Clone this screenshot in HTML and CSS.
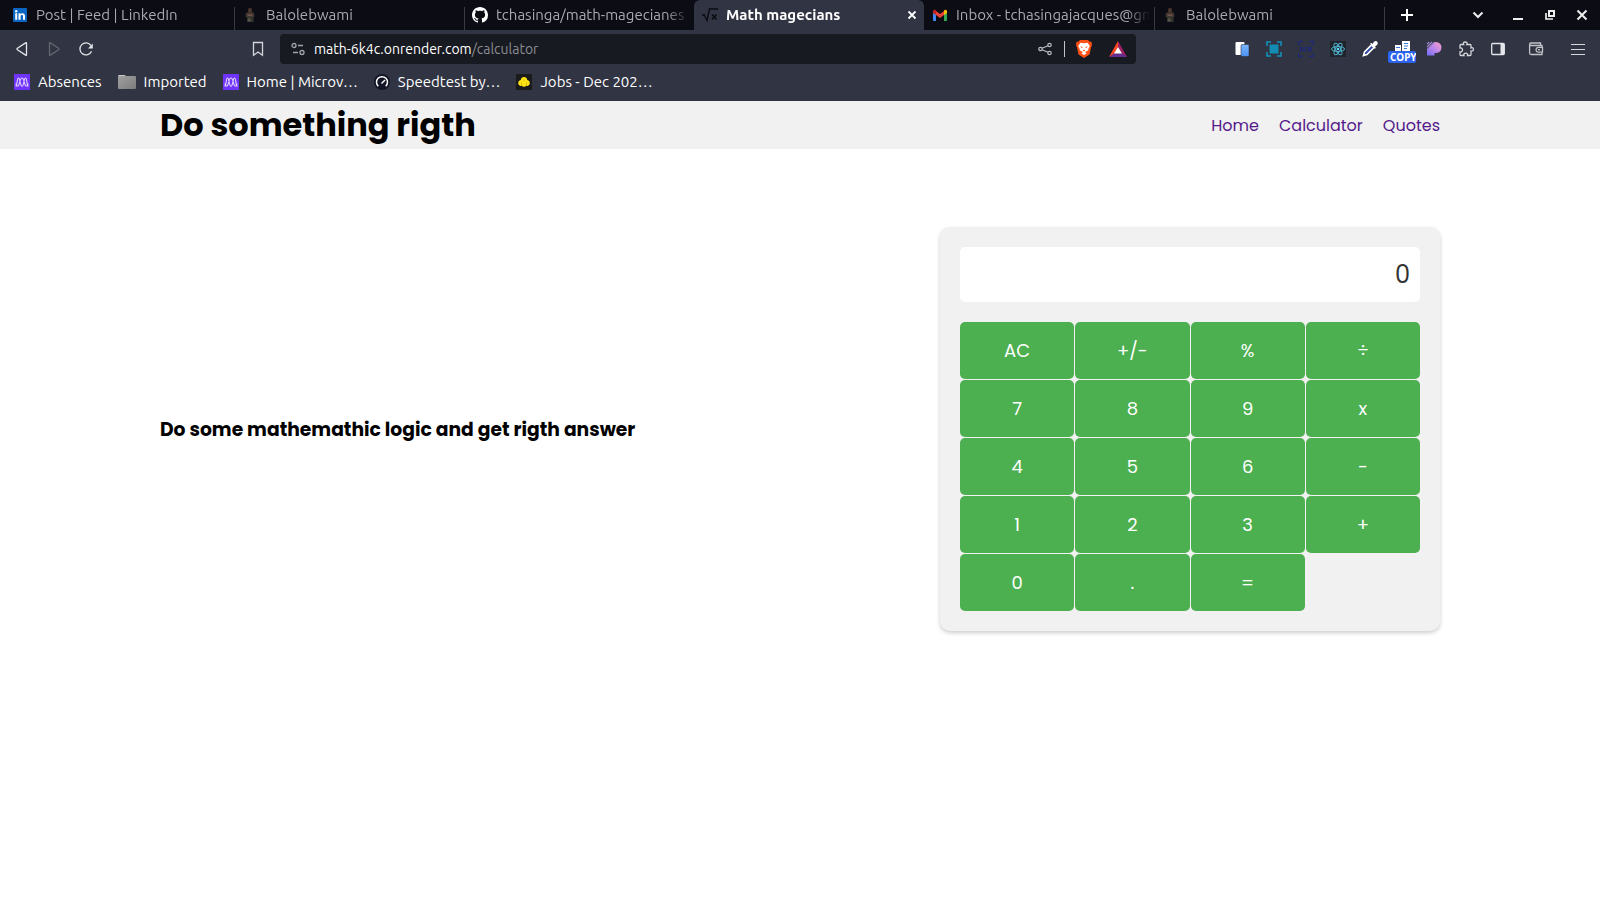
FILE: index.html
```html
<!DOCTYPE html>
<html lang="en">
<head>
<meta charset="utf-8">
<title>Math magecians</title>
<link rel="stylesheet" href="styles.css">
</head>
<body>
<svg class="defs" aria-hidden="true">
  <defs>
    <linearGradient id="gPurple" x1="1" y1="0" x2="0" y2="1"><stop offset="0" stop-color="#f7a0c4"/><stop offset=".5" stop-color="#bd86ec"/><stop offset="1" stop-color="#6f6cf5"/></linearGradient>
    <linearGradient id="gFolder" x1="0" y1="0" x2="1" y2="1"><stop offset="0" stop-color="#a2a2a2"/><stop offset="1" stop-color="#7c7c7c"/></linearGradient>
    <linearGradient id="gBlue" x1="0" y1="0" x2="0" y2="1"><stop offset="0" stop-color="#7db6fb"/><stop offset="1" stop-color="#4a92f5"/></linearGradient>
    <symbol id="person" viewBox="0 0 16 16">
      <rect x="6" y="1" width="4" height="4.500" rx="1.500" fill="#46332c"/>
      <path d="M4 6l2.500-1h3l2.500 1 .5 3.500-1.500 1H5l-1.500-1z" fill="#42342e"/>
      <path d="M5.500 7.500h5v1.200h-5z" fill="#7b6053"/><path d="M5 10h6.500v5H5z" fill="#35352f"/><path d="M6 11.500h2.500v3H6z" fill="#54544a"/>
    </symbol>
    <symbol id="micro" viewBox="0 0 16 16">
      <rect width="16" height="16" fill="#6f33fb"/>
      <path d="M1.500 12.200C3.500 12 2.800 4 4.500 4S6 12.200 8 12.200 9.800 4 11.500 4s1 8.200 3 8.200M2 9.500C2 12 3.800 13 4.800 11S6 4 8 4s2.200 5 3.200 7 2.800 1 2.800-1.500" fill="none" stroke="#e0d2ff" stroke-width="1.100"/>
    </symbol>
  </defs>
</svg>

<header class="browser">
  <div class="tabstrip">
    <div class="tab">
      <svg class="icon" viewBox="0 0 16 16"><rect x="1" y="1" width="14" height="14" rx="1" fill="#0a66c2"/><path d="M3.200 6.300h2v6.500h-2zM6.500 6.300h2v1c1.200-1.800 4.500-1.500 4.500 1.700v3.800h-2V9.400c0-2-2.400-1.900-2.400 0v3.400H6.500z" fill="#fff"/><circle cx="4.200" cy="4.200" r="1.200" fill="#fff"/></svg>
      <span class="tab-title">Post | Feed | LinkedIn</span>
    </div>
    <div class="tab"><svg class="icon"><use href="#person"/></svg><span class="tab-title">Balolebwami</span></div>
    <div class="tab">
      <svg class="icon" viewBox="0 0 16 16"><path fill="#fff" d="M8 0C3.580 0 0 3.580 0 8c0 3.540 2.290 6.530 5.470 7.590.4.070.55-.17.55-.38 0-.19-.01-.82-.01-1.490-2.010.37-2.530-.49-2.690-.94-.09-.23-.48-.94-.82-1.130-.28-.15-.68-.52-.01-.53.63-.01 1.080.58 1.230.82.72 1.210 1.870.87 2.330.66.07-.52.28-.87.51-1.070-1.780-.2-3.640-.89-3.640-3.950 0-.87.31-1.590.82-2.150-.08-.2-.36-1.020.08-2.120 0 0 .67-.21 2.200.82.64-.18 1.320-.27 2-.27s1.360.09 2 .27c1.530-1.040 2.200-.82 2.200-.82.44 1.100.16 1.920.08 2.120.51.56.82 1.270.82 2.150 0 3.070-1.870 3.750-3.650 3.950.29.25.54.73.54 1.480 0 1.070-.01 1.930-.01 2.200 0 .21.15.46.55.38A8.010 8.010 0 0016 8c0-4.420-3.580-8-8-8z"/></svg>
      <span class="tab-title">tchasinga/math-magecianes</span>
    </div>
    <div class="tab tab-active">
      <svg class="icon" viewBox="0 0 16 16"><path d="M0 8.500l2-1 3 6L7.500 2H16" fill="none" stroke="#0b0c14" stroke-width="1.400"/><path d="M10 7.500l4.500 5M14.500 7.500l-4.500 5" stroke="#0b0c14" stroke-width="1.700"/></svg>
      <span class="tab-title">Math magecians</span>
      <button class="tab-close" aria-label="Close tab"><svg class="icon" viewBox="0 0 16 16"><path d="M4.500 4.500l7 7M11.500 4.500l-7 7" stroke="#fff" stroke-width="1.800"/></svg></button>
    </div>
    <div class="tab">
      <svg class="icon" viewBox="0 0 16 16"><path fill="#4285f4" d="M1 4h3v10H2q-1 0-1-1z"/><path fill="#34a853" d="M12 4h3v9q0 1-1 1h-2z"/><path fill="#ea4335" d="M4 4l4 3 4-3v4l-4 3-4-3z"/><path fill="#c5221f" d="M1 4.500C1 2.500 3 2.200 4 3.500V8L1 6z"/><path fill="#fbbc04" d="M15 4.500C15 2.500 13 2.200 12 3.500V8l3-2z"/></svg>
      <span class="tab-title">Inbox - tchasingajacques@gm</span>
    </div>
    <div class="tab"><svg class="icon"><use href="#person"/></svg><span class="tab-title">Balolebwami</span></div>
    <button class="tool new-tab" aria-label="New tab"><svg class="icon" viewBox="0 0 16 16"><path d="M8 2v12M2 8h12" stroke="#fff" stroke-width="2"/></svg></button>
    <div class="window-controls">
      <button class="tool tab-search" aria-label="Search tabs"><svg class="icon" viewBox="0 0 16 16"><path d="M3.500 5.500L8 10l4.500-4.500" fill="none" stroke="#eee" stroke-width="2"/></svg></button>
      <button class="tool" aria-label="Minimize"><svg class="icon" viewBox="0 0 16 16"><path d="M3 12h10" stroke="#eee" stroke-width="2"/></svg></button>
      <button class="tool" aria-label="Restore"><svg class="icon" viewBox="0 0 16 16"><path d="M7 4h5v5H7z" fill="none" stroke="#eee" stroke-width="2"/><path d="M4 6v6h7" fill="none" stroke="#eee" stroke-width="1.700"/></svg></button>
      <button class="tool" aria-label="Close window"><svg class="icon" viewBox="0 0 16 16"><path d="M3.500 3.500l9 9M12.500 3.500l-9 9" stroke="#eee" stroke-width="2"/></svg></button>
    </div>
  </div>

  <div class="toolbar">
    <button class="tool" aria-label="Back"><svg class="icon" viewBox="0 0 16 16"><path d="M12.500 2.300v11.400q0 1-.9.400L3.400 8.700q-.9-.7 0-1.400l8.200-5.400q.9-.6.9.4z" fill="none" stroke="#e4e5ea" stroke-width="1.300"/></svg></button>
    <button class="tool" aria-label="Forward"><svg class="icon" viewBox="0 0 16 16"><path d="M3.500 2.300v11.400q0 1 .9.400l8.200-5.400q.9-.7 0-1.400L4.400 1.900q-.9-.6-.9.400z" fill="none" stroke="#646672" stroke-width="1.300"/></svg></button>
    <button class="tool" aria-label="Reload"><svg class="icon" viewBox="0 0 16 16"><path d="M13.500 10.200a6 6 0 1 1-.5-5.500" fill="none" stroke="#e4e5ea" stroke-width="1.300"/><path d="M14.800 2.500v5H10z" fill="#e4e5ea"/></svg></button>
    <button class="tool bookmark" aria-label="Bookmark this page"><svg class="icon" viewBox="0 0 16 16"><path d="M3.500 1.500h9v12.800L8 11l-4.500 3.300z" fill="none" stroke="#d5d6db" stroke-width="1.300"/></svg></button>
    <div class="address">
      <svg class="icon" viewBox="0 0 16 16" fill="none" stroke="#a2a4a9" stroke-width="1.300"><circle cx="4" cy="4.500" r="2"/><circle cx="12" cy="11.500" r="2"/><path d="M8 4.500h5M3 11.500h5"/></svg>
      <span class="url">math-6k4c.onrender.com<span class="url-path">/calculator</span></span>
      <button class="tool" aria-label="Share"><svg class="icon" viewBox="0 0 16 16" fill="none" stroke="#b9bbbf" stroke-width="1.200"><circle cx="3.500" cy="8" r="1.700"/><circle cx="12.500" cy="4" r="1.700"/><circle cx="12.500" cy="12" r="1.700"/><path d="M5 7.300l6-2.600M5 8.700l6 2.600"/></svg></button>
      <span class="divider"></span>
      <button class="tool shield" aria-label="Brave Shields"><svg class="icon-lg" viewBox="0 0 18 18"><path d="M5 0h8l1.500 1.500L16.500 2l.5 3-1 2.500-1.500 7L9 18l-5.500-3.500L2 7.500 1 5l.5-3 2-.5z" fill="#fb4f13"/><path d="M5.500 2.800L9 3.300l3.500-.5L14.800 6l-1.300 2.500-.4 2-3 1.500 1.500 1.500L9 15l-2.600-1.500L7.900 12l-3-1.500-.4-2L3.200 6z" fill="#fff"/><path d="M5 6.200l2.600.9-.5 1.200zM13 6.200l-2.600.9.5 1.200zM9 9.500l1.200 1L9 11.500l-1.200-1z" fill="#fb4f13"/></svg></button>
      <button class="tool" aria-label="Brave Rewards"><svg class="icon-lg" viewBox="0 0 18 18"><path d="M9 1L0 17l5.500-3L9 7z" fill="#ff4724"/><path d="M9 1l9 16-5.500-3L9 7z" fill="#9e1f63"/><path d="M0 17h18l-5.500-4h-7z" fill="#662d91"/><path d="M9 7l4 6.500H5z" fill="#fff"/></svg></button>
    </div>
    <button class="tool" aria-label="Clipboard"><svg class="icon" viewBox="0 0 16 16"><rect x="1.500" y="1" width="9" height="13" rx="1" fill="#fff"/><rect x="7" y="3.500" width="8" height="12" rx="1" fill="url(#gBlue)" stroke="#313442" stroke-width=".6"/></svg></button>
    <button class="tool" aria-label="Screenshot"><svg class="icon" viewBox="0 0 16 16"><path d="M1 5V1h4M11 1h4v4M15 11v4h-4M5 15H1v-4" fill="none" stroke="#1194bd" stroke-width="1.500"/><rect x="3.500" y="3.500" width="9" height="9" fill="#138cb4"/></svg></button>
    <button class="tool" aria-label="OCR"><svg class="icon" viewBox="0 0 16 16" fill="none" stroke="#1d287c" stroke-width="1.200"><path d="M.6 4V.6H5M11 .6h4.400V4M15.400 12v3.400H11M5 15.400H.6V12"/><ellipse cx="3.800" cy="8" rx="1.500" ry="2"/><path d="M9.400 6.300q-2.600-.6-2.600 1.700t2.600 1.700M11.200 10.300V6.100h1.300q1.600 1.100 0 2.200h-1.300l2.400 2"/></svg></button>
    <button class="tool" aria-label="React Developer Tools"><svg class="icon" viewBox="0 0 16 16"><rect width="16" height="16" fill="#20232a"/><g fill="none" stroke="#4fb4d0"><ellipse cx="8" cy="8" rx="6.500" ry="2.500"/><ellipse cx="8" cy="8" rx="6.500" ry="2.500" transform="rotate(60 8 8)"/><ellipse cx="8" cy="8" rx="6.500" ry="2.500" transform="rotate(120 8 8)"/></g><circle cx="8" cy="8" r="1.300" fill="#61dafb"/></svg></button>
    <button class="tool" aria-label="Color picker"><svg class="icon" viewBox="0 0 16 16"><path d="M1.500 14.500l1-3.500 7-7 2.500 2.500-7 7z" fill="#3048a5" stroke="#fff" stroke-width="1.600"/><path d="M8 2.500L9.500 2l1 1L12 .8q2-1.600 3.200 0t-.2 3.200L13 5.500l.8 1-.8 1.500z" fill="#fff"/></svg></button>
    <button class="tool copy" aria-label="Copy text"><svg class="icon" viewBox="0 0 16 16"><path d="M8 0h8v10H8zM1 4h6v6H1z" fill="#fff"/><path d="M10 2.500h4M10 5h4M2 6.500h4M10 7.500h3" stroke="#3977d7" stroke-width="1"/></svg><span class="badge">COPY</span></button>
    <button class="tool" aria-label="Page tools"><svg class="icon" viewBox="0 0 16 16"><path d="M1 9l8-8h1a5.500 5.500 0 0 1 0 11H8.500v2.500H1z" fill="url(#gPurple)"/><path d="M1 3.200L3.200 1M1 6l5-5M1 8.700L8.700 1" stroke="#a489da" stroke-width="1.100"/></svg></button>
    <button class="tool" aria-label="Extensions"><svg class="icon" viewBox="0 0 16 16"><path d="M3 3.500h2.700C4.800 1.500 6 1 7.300 1s2.300.7 1.500 2.500H12q1 0 1 1V7c2-.8 2.400.3 2.400 1.400S14.500 10.500 13 10v3.500q0 1-1 1H9.500c.6-1.500-.6-2.400-1.800-2.400S5.300 13 6 14.500H3q-1 0-1-1V11c1.500.2 2.500-.9 2.500-2.200S3.500 6.600 2 7V4.500q0-1 1-1z" fill="none" stroke="#d6d7dc" stroke-width="1.300"/></svg></button>
    <button class="tool" aria-label="Sidebar"><svg class="icon" viewBox="0 0 16 16"><rect x="1.700" y="2.500" width="12.600" height="11" rx="1" fill="none" stroke="#e4e5ea" stroke-width="1.300"/><path d="M10.500 2.500h3.500v11h-3.500z" fill="#e4e5ea"/></svg></button>
    <button class="tool wallet" aria-label="Wallet"><svg class="icon" viewBox="0 0 16 16" fill="none" stroke="#c2c3c8" stroke-width="1.300"><path d="M14 6V4.500H2.500Q1.500 4 1.700 3q.3-1 1.300-1h9.500v2.500M1.600 3v9q0 1.500 1.500 1.500H14v-2"/><path d="M14.500 6.300H10q-2 .5-2 2.400t2 2.400h4.500zM10 8.700h2"/></svg></button>
    <button class="tool menu" aria-label="Menu"><svg class="icon" viewBox="0 0 16 16"><path d="M1 3.500h14M1 8.500h14M1 13.500h14" stroke="#d6d7dc" stroke-width="1.200"/></svg></button>
  </div>

  <nav class="bookmarks" aria-label="Bookmarks">
    <a href="#"><svg class="icon"><use href="#micro"/></svg>Absences</a>
    <a href="#"><svg class="icon-lg" viewBox="0 0 18 18"><path d="M1 2h6l1 1h9q1 0 1 1v11q0 1-1 1H1q-1 0-1-1V3q0-1 1-1z" fill="url(#gFolder)"/><path d="M1 2.500h5.500" stroke="#c9c9c9"/></svg>Imported</a>
    <a href="#"><svg class="icon"><use href="#micro"/></svg>Home | Microv…</a>
    <a href="#"><svg class="icon" viewBox="0 0 16 16"><circle cx="8" cy="8" r="8" fill="#141526"/><path d="M4.300 12.200a5.500 5.500 0 1 1 7.400 0" fill="none" stroke="#fff" stroke-width="1.500"/><path d="M7.500 9.500L11 6" stroke="#fff" stroke-width="1.500"/></svg>Speedtest by…</a>
    <a href="#"><svg class="icon" viewBox="0 0 16 16"><rect width="16" height="16" fill="#1b1b1c"/><path d="M5.500 4q2.500-2 5 0l.8 2 2 1 .6 3-2 2-1.400-.2q-2.500 2-5 0L4.100 12l-2-2 .6-3 2-1z" fill="#ffe414"/><path d="M5.500 8.500v3M10.500 8.500v3M7 6h2" stroke="#c4a809" stroke-width=".7"/></svg>Jobs - Dec 202…</a>
  </nav>
</header>

<div class="site-header">
  <h1>Do something rigth</h1>
  <nav class="site-nav" aria-label="Main">
    <a href="#">Home</a>
    <a href="#">Calculator</a>
    <a href="#">Quotes</a>
  </nav>
</div>

<main class="content">
  <h3>Do some mathemathic logic and get rigth answer</h3>
  <section class="calculator" aria-label="Calculator">
    <output class="display">0</output>
    <div class="keys">
      <button>AC</button><button>+/-</button><button>%</button><button>÷</button>
      <button>7</button><button>8</button><button>9</button><button>x</button>
      <button>4</button><button>5</button><button>6</button><button>-</button>
      <button>1</button><button>2</button><button>3</button><button>+</button>
      <button>0</button><button>.</button><button>=</button>
    </div>
  </section>
</main>
</body>
</html>
```
FILE: styles.css
```css
* {
  box-sizing: border-box;
}

body {
  margin: 0;
  background: #fff;
  color: #000;
  font-family: Poppins, Inter, sans-serif;
}

h1,
h3 {
  margin: 0;
}

button {
  margin: 0;
  padding: 0;
  border: 0;
  background: none;
  font-family: inherit;
}

a {
  text-decoration: none;
}

.defs {
  position: absolute;
  width: 0;
  height: 0;
}

.icon,
.icon-lg {
  display: block;
  flex: none;
  width: 16px;
  height: 16px;
}

.icon-lg {
  width: 18px;
  height: 18px;
}

/* Browser chrome */
.browser {
  background: #313442;
  color: #fff;
  font: 15px/20px Ubuntu, "Noto Sans", sans-serif;
}

.tabstrip {
  display: flex;
  height: 30px;
  padding: 0 2px 0 4px;
  background: #0b0c14;
}

.tab {
  display: flex;
  flex: 0 1 230px;
  align-items: center;
  gap: 8px;
  min-width: 0;
  padding: 0 4px 0 8px;
  color: #a9aab0;
}

.tab + .tab,
.new-tab {
  background: linear-gradient(#3a3b40, #3a3b40) left bottom / 1px 23px no-repeat;
}

.tab-title {
  flex: 1;
  overflow: hidden;
  white-space: nowrap;
  mask-image: linear-gradient(to left, transparent, #000 24px);
}

.tab + .tab-active {
  border-radius: 6px 6px 0 0;
  background: #313442;
  color: #fff;
  font-weight: 600;
}

.tab-active + .tab {
  background: none;
}

.tool {
  display: flex;
  flex: none;
  align-items: center;
  justify-content: center;
  width: 32px;
  height: 30px;
}

.new-tab {
  width: 46px;
}

.window-controls {
  display: flex;
  margin-left: auto;
}

.tab-search {
  margin-right: 8px;
}

.toolbar {
  display: flex;
  align-items: center;
  height: 38px;
  padding: 0 6px;
}

.bookmark {
  margin: 0 6px 0 140px;
}

.address {
  display: flex;
  flex: 1;
  align-items: center;
  height: 30px;
  margin-right: 90px;
  padding: 0 2px 0 10px;
  border-radius: 4px;
  background: #181a21;
}

.url {
  flex: 1;
  margin-left: 8px;
  font-size: 14px;
}

.url-path {
  color: #8b8d92;
}

.divider {
  width: 1px;
  height: 16px;
  margin-left: 3px;
  background: #c3c4c8;
}

.shield {
  margin: 0 2px 0 3px;
}

.copy {
  position: relative;
}

.badge {
  position: absolute;
  top: 17px;
  left: 2px;
  width: 28px;
  height: 12px;
  padding-left: 2px;
  overflow: hidden;
  border-radius: 2px;
  background: #2c63ee;
  color: #fff;
  font: bold 10px/12px "Noto Sans", sans-serif;
  text-align: left;
}

.wallet {
  margin: 0 10px 0 6px;
}

.bookmarks {
  display: flex;
  gap: 16px;
  height: 33px;
  padding: 0 14px;
}

.bookmarks a {
  display: flex;
  align-items: center;
  gap: 8px;
  height: 28px;
  color: #fff;
}

/* Page */
.site-header {
  display: flex;
  align-items: center;
  justify-content: space-between;
  padding: 0 10%;
  background: #f1f1f1;
}

.site-header h1 {
  font-size: 32px;
  line-height: 48px;
}

.site-nav {
  display: flex;
  gap: 20px;
}

.site-nav a {
  color: #551a8b;
  font-size: 16px;
}

.content {
  display: flex;
  align-items: center;
  justify-content: space-between;
  padding: 78px 10%;
}

.calculator {
  width: 500px;
  padding: 20px;
  border-radius: 10px;
  background: #f1f1f1;
  box-shadow: 0 2px 4px rgba(0, 0, 0, 0.2);
}

.display {
  display: block;
  margin-bottom: 20px;
  padding: 10px;
  border-radius: 5px;
  background: #fff;
  color: #333;
  font-size: 24px;
  line-height: 35px;
  text-align: right;
}

.keys {
  display: grid;
  grid-template-columns: repeat(4, 1fr);
  gap: 1px;
}

.keys button {
  padding: 15px;
  border-radius: 5px;
  background: #4caf50;
  color: #fff;
  font-size: 18px;
  line-height: 27px;
}
```
